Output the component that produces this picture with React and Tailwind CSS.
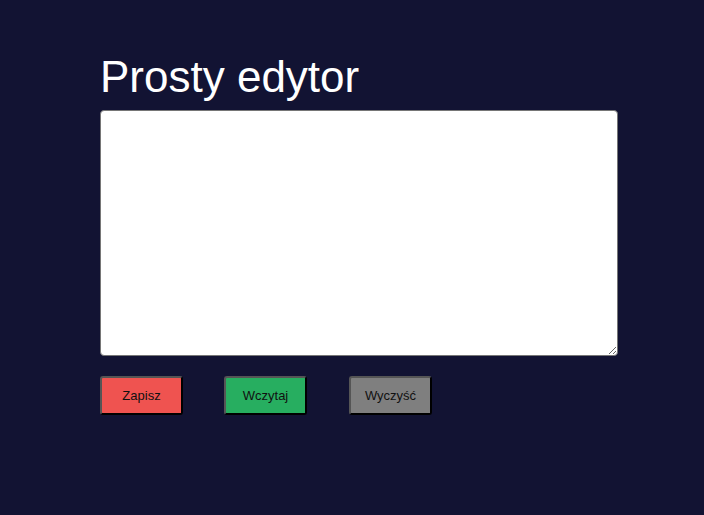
export default function App() {
  return (
    <div className="min-h-[515px] bg-[#121333] pt-[47px] pl-[100px]" style={{ fontFamily: '"Liberation Sans", Arial, sans-serif' }}>
      <h1 className="text-[44px] leading-[60px] text-white font-normal">Prosty edytor</h1>
      <textarea className="mt-[3px] block w-[518px] h-[246px] bg-white rounded-[4px] border border-[#767676] resize-y"></textarea>
      <div className="flex mt-[20px]">
        <button className="w-[83px] h-[39px] bg-[#ef5350] text-[13px] text-[#111] border-2 border-[#555] rounded-[3px] [border-style:outset]">Zapisz</button>
        <button className="ml-[41px] w-[83px] h-[39px] bg-[#27ae60] text-[13px] text-[#111] border-2 border-[#555] rounded-[3px] [border-style:outset]">Wczytaj</button>
        <button className="ml-[42px] w-[83px] h-[39px] bg-[#7f7f7f] text-[13px] text-[#111] border-2 border-[#555] rounded-[3px] [border-style:outset]">Wyczyść</button>
      </div>
    </div>
  );
}
